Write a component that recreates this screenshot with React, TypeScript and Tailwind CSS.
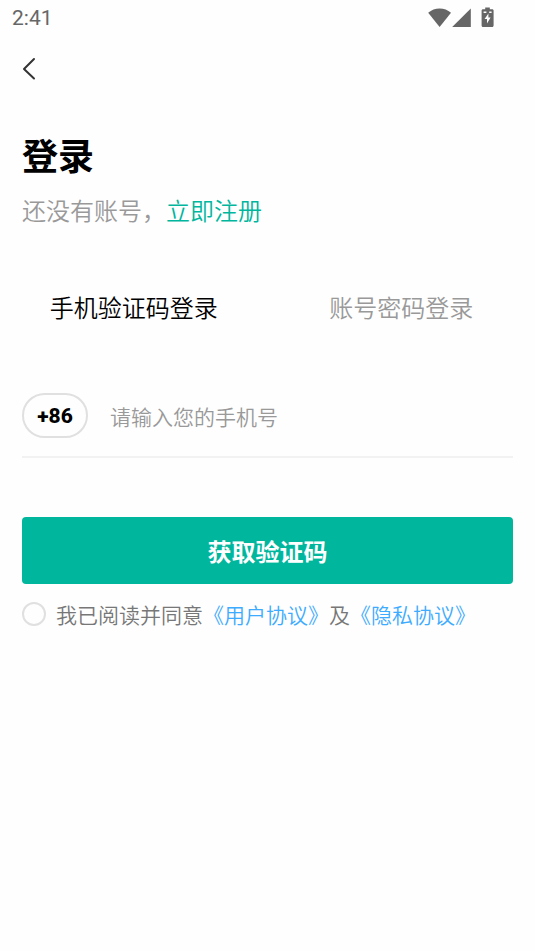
import React, { useState } from 'react';

const tabs = [
  { id: 'sms', label: '手机验证码登录' },
  { id: 'password', label: '账号密码登录' }
];

function StatusBar() {
  return (
    <div className="flex items-center justify-between h-9 pl-3 pr-10 text-[#666666]">
      <span className="font-[Roboto] text-[21px] leading-[38px]">2:41</span>
      <div className="flex items-center">
        {/* Wifi */}
        <svg className="w-6 h-5" viewBox="0 0 24 20" fill="currentColor">
          <path d="M12.6 18.9 L1.2 4.8 C4.4 2 8.3 0.5 12.6 0.5 S20.8 2 24 4.8 Z" />
        </svg>
        {/* Signal */}
        <svg className="w-5 h-5" viewBox="0 0 20 20" fill="currentColor">
          <path d="M19.8 0.5 V18.9 H1.2 Z" />
        </svg>
        {/* Battery */}
        <svg className="w-4 h-5 ml-2 overflow-visible" viewBox="0 0 16 20" fill="currentColor">
          <path
            fillRule="evenodd"
            d="M6.2 -0.6 H10.8 V1.2 H13.2 C14 1.2 14.6 1.8 14.6 2.6 V17.4 C14.6 18.3 14 18.9 13.2 18.9 H4 C3.2 18.9 2.6 18.3 2.6 17.4 V2.6 C2.6 1.8 3.2 1.2 4 1.2 H6.2 Z M9.4 5.4 L5.6 11 H8 V15.6 L11.6 9.4 H9.4 Z M4.6 3.4 V5 H7.4 V3.4 Z M10.2 3.4 V5 H12.6 V3.4 Z"
          />
        </svg>
      </div>
    </div>
  );
}

export default function App() {
  const [activeTab, setActiveTab] = useState('sms');
  const [phone, setPhone] = useState('');
  const [agreed, setAgreed] = useState(false);

  return (
    <main className="min-h-screen bg-[#fefefe] font-['Noto_Sans_CJK_SC',sans-serif]">
      <StatusBar />

      {/* Back */}
      <header className="flex items-center h-16 px-5">
        <button type="button" aria-label="返回" className="text-[#333333]">
          <svg
            className="w-4 h-6"
            viewBox="0 0 16 24"
            fill="none"
            stroke="currentColor"
            strokeWidth="2"
            strokeLinecap="round"
            strokeLinejoin="round"
          >
            <path d="M14 3 L4 13 L14 22.5" />
          </svg>
        </button>
      </header>

      {/* Title */}
      <section className="px-[22px] pt-[30px]">
        <h1 className="text-4xl leading-12 font-bold text-black">登录</h1>
        <p className="mt-[14px] text-2xl leading-9 font-[350] text-[#999999]">
          还没有账号，
          <a href="#register" className="text-[#00b69d]">立即注册</a>
        </p>
      </section>

      {/* Login tabs */}
      <nav className="grid grid-cols-2 mt-[63px]">
        {tabs.map((tab) => (
          <button
            key={tab.id}
            type="button"
            onClick={() => setActiveTab(tab.id)}
            className={`text-2xl leading-8 font-[350] ${activeTab === tab.id ? 'text-black' : 'text-[#999999]'}`}
          >
            {tab.label}
          </button>
        ))}
      </nav>

      <form className="px-[22px] pt-[70px]" onSubmit={(e) => e.preventDefault()}>
        {/* Phone number */}
        <div className="flex items-center gap-[22px] pb-[18px] border-b-2 border-[#f2f2f2]">
          <button
            type="button"
            className="w-[66px] h-[45px] shrink-0 rounded-full border-2 border-[#e0e0e0] font-[Roboto] font-extrabold text-[21px] leading-[34px] text-black"
          >
            +86
          </button>
          <input
            type="tel"
            aria-label="手机号"
            placeholder="请输入您的手机号"
            value={phone}
            onChange={(e) => setPhone(e.target.value)}
            className="flex-1 min-w-0 h-8 text-[21px] font-[350] text-black placeholder:text-[#999999] outline-none"
          />
        </div>

        <button
          type="submit"
          className="w-full h-[67px] mt-[59px] rounded bg-[#00b69d] text-2xl font-bold text-white"
        >
          获取验证码
        </button>

        {/* Agreement */}
        <div className="flex items-center gap-[10px] mt-[14px] text-[21px] leading-8 font-[350] text-[#777777]">
          <input
            id="agree"
            type="checkbox"
            checked={agreed}
            onChange={(e) => setAgreed(e.target.checked)}
            className="appearance-none size-6 shrink-0 rounded-full border-2 border-[#e0e0e0] checked:border-[#00b69d] checked:bg-[#00b69d]"
          />
          <label htmlFor="agree">
            我已阅读并同意
            <a href="#terms" className="text-[#3dabff]">《用户协议》</a>
            及
            <a href="#privacy" className="text-[#3dabff]">《隐私协议》</a>
          </label>
        </div>
      </form>
    </main>
  );
}
